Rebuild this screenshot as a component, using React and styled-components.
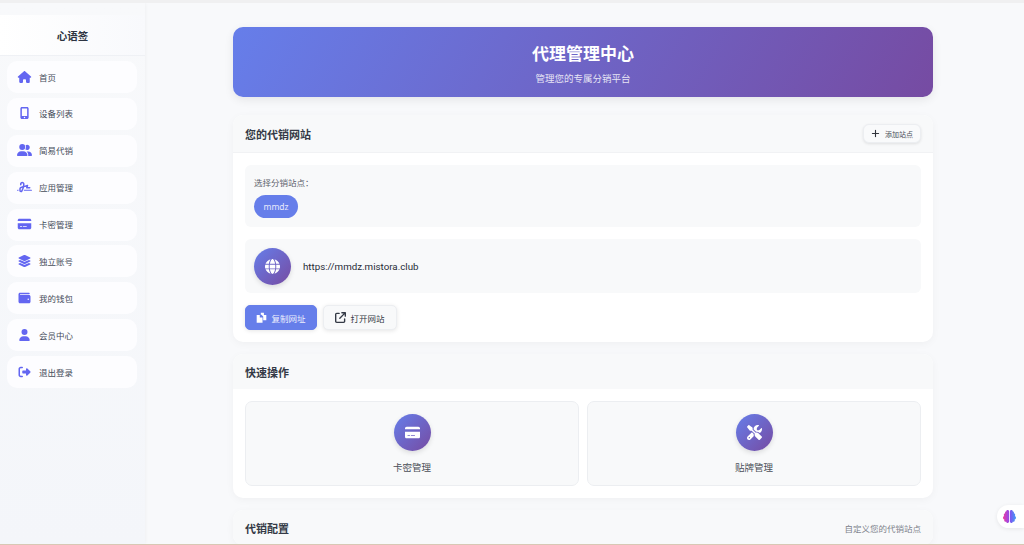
import React from "react";
import styled, { createGlobalStyle } from "styled-components";
import {
  FaHouse,
  FaMobileScreenButton,
  FaUserGroup,
  FaSignature,
  FaCreditCard,
  FaLayerGroup,
  FaWallet,
  FaUser,
  FaRightFromBracket,
  FaGlobe,
  FaArrowUpRightFromSquare,
  FaScrewdriverWrench,
  FaPlus,
  FaBrain,
} from "react-icons/fa6";

const GlobalStyle = createGlobalStyle`
  html, body {
    margin: 0;
    height: 100%;
    overflow: hidden;
    background: #f8f9fb;
    font-family: "Noto Sans", "Noto Sans CJK SC", sans-serif;
    color: #2d3442;
  }
`;

const Page = styled.div`
  height: 545px;
  box-sizing: border-box;
  border-top: 3px solid #f0f0f1;
  border-bottom: 1px solid #d8c8b4;
  display: flex;
  overflow: hidden;
  position: relative;
`;

const Sidebar = styled.aside`
  width: 145px;
  flex: none;
  padding-top: 12px;
  background: linear-gradient(180deg, #f8f9fb, #f4f6fa);
  box-shadow: 1px 0 3px rgba(0, 0, 0, 0.03);
`;

const Brand = styled.div`
  height: 41px;
  box-sizing: border-box;
  display: flex;
  align-items: center;
  justify-content: center;
  font-size: 10.5px;
  font-weight: 700;
  background: linear-gradient(90deg, #ffffff, #f8f9fc);
  border-bottom: 1px solid #eff1f5;
  margin-bottom: 5px;
`;

const Nav = styled.nav`
  display: flex;
  flex-direction: column;
  gap: 4.875px;
  padding: 0 8px 0 7px;
`;

const NavItem = styled.a`
  height: 32px;
  box-sizing: border-box;
  padding: 0 0 1px 10px;
  display: flex;
  align-items: center;
  gap: 7px;
  background: #fdfdff;
  border-radius: 10px;
  font-size: 8.5px;
  color: #454c5a;
  svg {
    width: 15px;
    height: 12px;
    color: #6366f1;
    flex: none;
  }
`;

const Main = styled.main`
  flex: 1;
  padding: 24px 91px 0 88px;
  display: flex;
  flex-direction: column;
  gap: 12px;
  min-width: 0;
`;

const Hero = styled.header`
  height: 70px;
  flex: none;
  box-sizing: border-box;
  padding-top: 16px;
  margin-bottom: 6px;
  border-radius: 10px;
  background: linear-gradient(120deg, #667eea, #764ba2);
  box-shadow: 0 3px 10px rgba(0, 0, 0, 0.08);
  color: #fff;
  text-align: center;
`;

const HeroTitle = styled.h1`
  margin: 0;
  font-size: 17px;
  line-height: 22px;
  font-weight: 700;
`;

const HeroSub = styled.p`
  margin: 7px 0 0;
  font-size: 9.5px;
  line-height: 14px;
  color: #e6e3f4;
`;

const Card = styled.section`
  flex: none;
  background: #fff;
  border-radius: 10px;
  box-shadow: 0 2px 8px rgba(0, 0, 0, 0.04);
  overflow: hidden;
`;

const CardHead = styled.div`
  height: ${(p) => p.$h}px;
  box-sizing: border-box;
  display: flex;
  align-items: center;
  justify-content: space-between;
  padding: 0 12px;
  background: #f8f9fa;
  border-bottom: ${(p) => (p.$line ? "1px solid #f1f2f4" : "none")};
`;

const CardTitle = styled.h2`
  margin: 0;
  font-size: 11px;
  font-weight: 700;
  color: #343a46;
`;

const HeadNote = styled.span`
  font-size: 8.5px;
  color: #7d828b;
`;

const AddButton = styled.button`
  height: 19px;
  width: 58px;
  padding: 0;
  display: flex;
  align-items: center;
  justify-content: center;
  gap: 5px;
  border: 1px solid #eceef1;
  border-radius: 6px;
  background: #f9fafb;
  box-shadow: 0 1px 3px rgba(0, 0, 0, 0.1);
  font: inherit;
  font-size: 7px;
  color: #4a4f58;
  svg {
    width: 9px;
    height: 9px;
    color: #30343b;
  }
`;

const CardBody = styled.div`
  padding: 12px;
  display: flex;
  flex-direction: column;
  gap: 12px;
`;

const Panel = styled.div`
  background: #f8f9fa;
  border-radius: 6px;
`;

const SitePicker = styled(Panel)`
  height: 62px;
  box-sizing: border-box;
  padding: 12px 9px 0;
`;

const PickerLabel = styled.div`
  font-size: 8.5px;
  line-height: 12px;
  color: #5c616a;
  margin-bottom: 4px;
`;

const SiteChip = styled.span`
  display: inline-flex;
  align-items: center;
  justify-content: center;
  width: 44px;
  height: 23px;
  border-radius: 12px;
  background: #667eea;
  color: #e6e9fc;
  font-size: 8.5px;
`;

const UrlPanel = styled(Panel)`
  height: 54px;
  box-sizing: border-box;
  padding-left: 9px;
  display: flex;
  align-items: center;
  gap: 12px;
`;

const Disc = styled.span`
  width: 37px;
  height: 37px;
  flex: none;
  border-radius: 50%;
  display: flex;
  align-items: center;
  justify-content: center;
  background: linear-gradient(135deg, #667eea, #764ba2);
  box-shadow: 0 2px 5px rgba(0, 0, 0, 0.12);
  color: #fff;
  svg {
    width: 15px;
    height: 15px;
  }
`;

const UrlText = styled.span`
  font-family: "Roboto", sans-serif;
  font-size: 9.75px;
  color: #262b36;
`;

const Actions = styled.div`
  display: flex;
  gap: 6px;
`;

const ActionButton = styled.button`
  height: 25px;
  width: ${(p) => (p.$primary ? 72 : 74)}px;
  padding: 0;
  box-sizing: border-box;
  display: flex;
  align-items: center;
  justify-content: center;
  gap: 4px;
  font: inherit;
  font-size: 8.5px;
  border-radius: 5px;
  border: 1px solid ${(p) => (p.$primary ? "#667eea" : "#eceef1")};
  background: ${(p) => (p.$primary ? "#667eea" : "#f8f9fa")};
  color: ${(p) => (p.$primary ? "#eef0fd" : "#343a46")};
  box-shadow: 0 1px 4px rgba(0, 0, 0, 0.1);
  svg {
    width: 11px;
    height: 11px;
    color: ${(p) => (p.$primary ? "#fff" : "#343a46")};
  }
`;

const QuickGrid = styled.div`
  display: grid;
  grid-template-columns: 1fr 1fr;
  gap: 8px;
`;

const QuickTile = styled.div`
  height: 85px;
  box-sizing: border-box;
  padding-top: 12px;
  display: flex;
  flex-direction: column;
  align-items: center;
  gap: 9px;
  border: 1px solid #eceef1;
  border-radius: 7px;
  background: #f8f9fa;
  font-size: 9.5px;
  color: #4a4f58;
`;

const FloatBadge = styled.div`
  position: absolute;
  right: 0;
  top: 502px;
  width: 27px;
  height: 23px;
  padding-left: 6px;
  box-sizing: border-box;
  display: flex;
  align-items: center;
  background: #fff;
  border-radius: 12px 0 0 12px;
  box-shadow: 0 1px 4px rgba(0, 0, 0, 0.08);
`;

const CopyGlyph = () => (
  <svg viewBox="0 0 16 16" fill="currentColor">
    <path d="M7 1h4.5v3.5H15V12h-4.5V6.5L8 4H7z" />
    <path d="M1 4.5h4.5V8H9.500v7.500H1z" />
  </svg>
);

const navItems = [
  [FaHouse, "首页"],
  [FaMobileScreenButton, "设备列表"],
  [FaUserGroup, "简易代销"],
  [FaSignature, "应用管理"],
  [FaCreditCard, "卡密管理"],
  [FaLayerGroup, "独立账号"],
  [FaWallet, "我的钱包"],
  [FaUser, "会员中心"],
  [FaRightFromBracket, "退出登录"],
];

export default function App() {
  return (
    <Page>
      <GlobalStyle />
      <Sidebar>
        <Brand>心语签</Brand>
        <Nav>
          {navItems.map(([Icon, label]) => (
            <NavItem key={label}>
              <Icon />
              {label}
            </NavItem>
          ))}
        </Nav>
      </Sidebar>
      <Main>
        <Hero>
          <HeroTitle>代理管理中心</HeroTitle>
          <HeroSub>管理您的专属分销平台</HeroSub>
        </Hero>
        <Card>
          <CardHead $h={38} $line>
            <CardTitle>您的代销网站</CardTitle>
            <AddButton>
              <FaPlus />
              添加站点
            </AddButton>
          </CardHead>
          <CardBody>
            <SitePicker>
              <PickerLabel>选择分销站点：</PickerLabel>
              <SiteChip>mmdz</SiteChip>
            </SitePicker>
            <UrlPanel>
              <Disc>
                <FaGlobe />
              </Disc>
              <UrlText>https://mmdz.mistora.club</UrlText>
            </UrlPanel>
            <Actions>
              <ActionButton $primary>
                <CopyGlyph />
                复制网址
              </ActionButton>
              <ActionButton>
                <FaArrowUpRightFromSquare />
                打开网站
              </ActionButton>
            </Actions>
          </CardBody>
        </Card>
        <Card>
          <CardHead $h={35}>
            <CardTitle>快速操作</CardTitle>
          </CardHead>
          <CardBody>
            <QuickGrid>
              <QuickTile>
                <Disc>
                  <FaCreditCard />
                </Disc>
                卡密管理
              </QuickTile>
              <QuickTile>
                <Disc>
                  <FaScrewdriverWrench />
                </Disc>
                贴牌管理
              </QuickTile>
            </QuickGrid>
          </CardBody>
        </Card>
        <Card>
          <CardHead $h={35}>
            <CardTitle>代销配置</CardTitle>
            <HeadNote>自定义您的代销站点</HeadNote>
          </CardHead>
        </Card>
      </Main>
      <FloatBadge>
        <svg width="0" height="0" style={{ position: "absolute" }}>
          <linearGradient id="brainFill" x1="0" y1="0" x2="1" y2="0">
            <stop offset="0" stopColor="#f0389f" />
            <stop offset="0.5" stopColor="#8a4cf0" />
            <stop offset="1" stopColor="#3f9cf5" />
          </linearGradient>
        </svg>
        <FaBrain size={13} style={{ fill: "url(#brainFill)" }} />
      </FloatBadge>
    </Page>
  );
}
